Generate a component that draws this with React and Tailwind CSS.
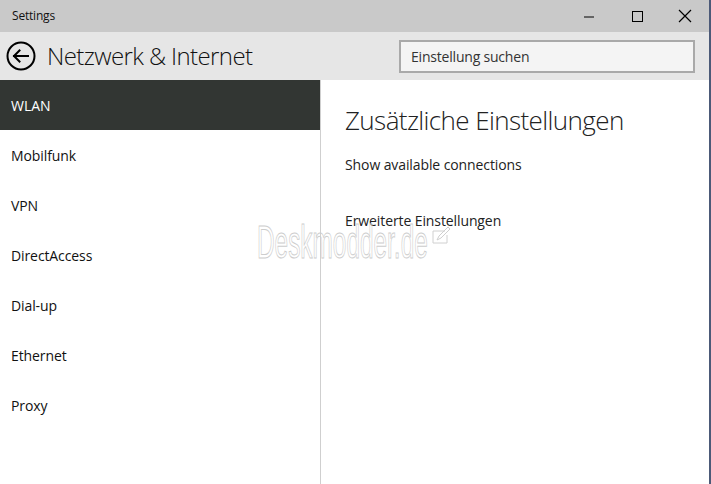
import React from "react";

const font = { fontFamily: '"Open Sans", "Noto Sans", sans-serif' };

function BackIcon() {
  return (
    <svg width="30" height="30" viewBox="0 0 30 30" fill="none">
      <circle cx="15" cy="15" r="13.5" stroke="#000" strokeWidth="2" />
      <path d="M8 15h14M13.5 9.5L8 15l5.5 5.5" stroke="#000" strokeWidth="2" strokeLinecap="square" />
    </svg>
  );
}

const items = ["Mobilfunk", "VPN", "DirectAccess", "Dial-up", "Ethernet", "Proxy"];

export default function App() {
  return (
    <div className="w-[711px] h-[484px] overflow-hidden bg-white flex flex-col relative text-[#111]" style={font}>
      <div className="h-[32px] bg-[#c9c9c9] flex items-center pl-[12px]">
        <span className="text-[12px] text-[#111] tracking-[-0.2px]">Settings</span>
        <div className="ml-auto flex items-center h-full">
          <div className="w-[48px] h-full flex items-center justify-center">
            <svg width="12" height="12" viewBox="0 0 12 12"><path d="M1 7h10" stroke="#000" strokeWidth="1" /></svg>
          </div>
          <div className="w-[48px] h-full flex items-center justify-center">
            <svg width="12" height="12" viewBox="0 0 12 12"><rect x="1.5" y="1.5" width="10" height="10" fill="none" stroke="#000" strokeWidth="1" /></svg>
          </div>
          <div className="w-[48px] h-full flex items-center justify-center">
            <svg width="14" height="14" viewBox="0 0 14 14"><path d="M1 1l12 12M13 1L1 13" stroke="#000" strokeWidth="1.2" /></svg>
          </div>
        </div>
        <div className="w-[2px] h-full bg-[#4c5a78]" />
      </div>
      <div className="flex-1 flex">
        <div className="flex-1 flex flex-col">
          <div className="h-[48px] bg-[#e6e6e6] flex items-center pl-[6px] pr-[14px]">
            <BackIcon />
            <span className="ml-[11px] text-[24px] font-light tracking-[-0.6px] text-[#111] leading-none">Netzwerk &amp; Internet</span>
            <div className="ml-auto w-[296px] h-[33px] border-2 border-[#a9a9a9] bg-[#f4f4f4] flex items-center pl-[10px]">
              <span className="text-[14px] text-[#333] tracking-[-0.2px]">Einstellung suchen</span>
            </div>
          </div>
          <div className="flex-1 flex">
            <div className="w-[320px] flex flex-col">
              <div className="h-[50px] bg-[#323633] flex items-center pl-[11px]">
                <span className="text-[14px] font-medium text-white tracking-[0px]">WLAN</span>
              </div>
              {items.map((t) => (
                <div key={t} className="h-[50px] flex items-center pl-[11px]">
                  <span className="text-[14px] text-[#111] tracking-[-0.1px]">{t}</span>
                </div>
              ))}
            </div>
            <div className="w-px bg-[#cfcfcf]" />
            <div className="flex-1 pl-[24px] pt-[21px] relative">
              <div className="text-[26px] font-light text-[#222] leading-[38px] tracking-[-0.6px]">Zusätzliche Einstellungen</div>
              <div className="mt-[15px] text-[14px] text-[#222] tracking-[-0.1px]">Show available connections</div>
              <div className="mt-[37px] text-[14px] text-[#222] tracking-[-0.1px] leading-[17px]">Erweiterte Einstellungen</div>
            </div>
          </div>
        </div>
        <div className="w-[2px] bg-[#4c5a78]" />
      </div>
      <div className="absolute left-[257px] top-[225px] pointer-events-none">
        <span
          className="text-[46px] leading-[34px] text-transparent inline-block origin-left scale-x-[0.53]"
          style={{ fontFamily: '"Liberation Sans", sans-serif', WebkitTextStroke: "1px #cdcdcd" }}
        >
          Deskmodder.de
        </span>
      </div>
      <svg className="absolute left-[432px] top-[226px]" width="20" height="18" viewBox="0 0 20 18" fill="none">
        <path d="M1 17V5h12" stroke="#d0d0d0" strokeWidth="1" />
        <path d="M1 17h14V9" stroke="#d0d0d0" strokeWidth="1" />
        <path d="M5 14l2-4 9-9 2 2-9 9z" stroke="#cfcfcf" strokeWidth="1" />
      </svg>
    </div>
  );
}
